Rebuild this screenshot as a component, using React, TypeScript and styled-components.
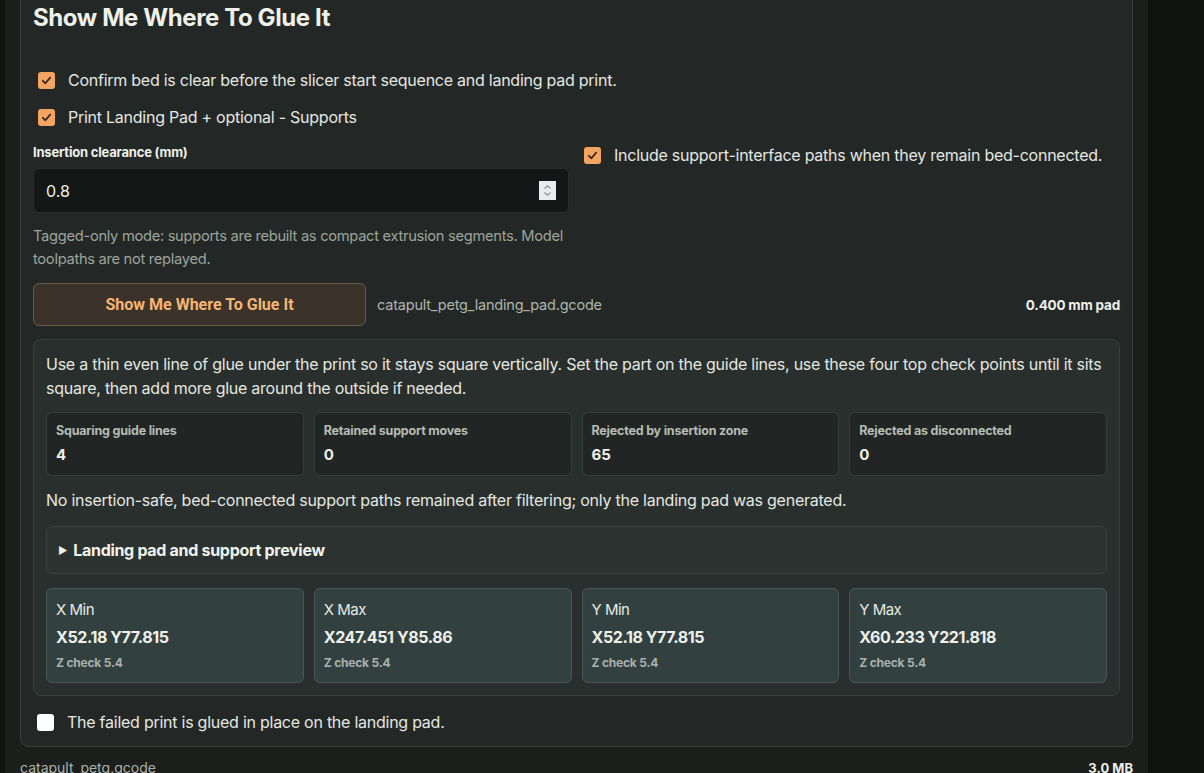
import styled, { createGlobalStyle } from "styled-components";

const GlobalStyle = createGlobalStyle`
	html, body {
		margin: 0;
		padding: 0;
		background: #101210;
		overflow: hidden;
	}
	body {
		font-family: Inter, "Noto Sans", sans-serif;
		color: #e6e9e3;
	}
	* {
		box-sizing: border-box;
	}
`;

const Shell = styled.div`
	margin-left: 5px;
	width: 1143px;
	height: 100vh;
	padding: 0 15px;
	background: #1c1e1b;
	overflow: hidden;
`;

const Card = styled.section`
	margin-top: -10px;
	padding: 11px 12px 12px;
	background: #232826;
	border: 1px solid #3a403c;
	border-radius: 9px;
	display: flex;
	flex-direction: column;
`;

const Title = styled.h2`
	margin: 0 0 34px;
	font-size: 24px;
	line-height: 32px;
	font-weight: 700;
	letter-spacing: -0.4px;
	color: #eef0ea;
`;

const CheckRow = styled.label`
	display: flex;
	align-items: center;
	gap: 13px;
	padding-left: 5px;
	font-size: 16px;
	line-height: 24px;
	letter-spacing: -0.25px;
	color: #e4e7e1;
	& + & {
		margin-top: 13px;
	}
`;

const Box = styled.span<{ $checked?: boolean }>`
	flex: none;
	width: 17px;
	height: 17px;
	border-radius: 3px;
	background: ${(p) => (p.$checked ? "#f2a560" : "#ffffff")};
	display: flex;
	align-items: center;
	justify-content: center;
`;

const Columns = styled.div`
	display: grid;
	grid-template-columns: 1fr 1fr;
	gap: 15px;
	margin-top: 14px;
	align-items: start;
`;

const Field = styled.div`
	display: flex;
	flex-direction: column;
`;

const FieldLabel = styled.span`
	font-size: 13px;
	line-height: 18px;
	font-weight: 700;
	letter-spacing: -0.2px;
	color: #eef0ea;
`;

const InputBox = styled.div`
	margin-top: 7px;
	height: 45px;
	padding: 0 12px;
	background: #141715;
	border: 1px solid #2a2f2c;
	border-radius: 6px;
	display: flex;
	align-items: center;
	justify-content: space-between;
	font-size: 16px;
	color: #eef0ea;
`;

const Spinner = styled.span`
	width: 17px;
	height: 19px;
	background: #e9ebee;
	display: flex;
	align-items: center;
	justify-content: center;
`;

const Hint = styled.p`
	margin: 12px 0 0;
	font-size: 14.7px;
	line-height: 23px;
	letter-spacing: -0.3px;
	color: #9ea39d;
`;

const ActionRow = styled.div`
	margin-top: 12px;
	display: flex;
	align-items: center;
	gap: 11px;
`;

const GlueButton = styled.button`
	width: 333px;
	height: 43px;
	background: #3b3329;
	border: 1px solid #6b5a45;
	border-radius: 6px;
	color: #f5b474;
	font-family: Roboto, "Liberation Sans", sans-serif;
	font-size: 16px;
	font-weight: 700;
	letter-spacing: 0;
`;

const FileName = styled.span`
	font-size: 14.5px;
	letter-spacing: -0.2px;
	color: #aeb3ad;
`;

const PadSize = styled.span`
	margin-left: auto;
	font-size: 13.5px;
	font-weight: 700;
	letter-spacing: -0.2px;
	color: #eef0ea;
`;

const Result = styled.div`
	margin-top: 13px;
	padding: 12px;
	background: #292f2c;
	border: 1px solid #39403c;
	border-radius: 8px;
	display: flex;
	flex-direction: column;
	gap: 12px;
`;

const Body = styled.p`
	margin: 0;
	font-size: 16px;
	line-height: 24px;
	letter-spacing: -0.25px;
	color: #e4e7e1;
`;

const Stats = styled.div`
	display: grid;
	grid-template-columns: repeat(4, 1fr);
	gap: 10px;
`;

const Stat = styled.div`
	padding: 9px 9px 9px;
	background: #212624;
	border: 1px solid #373e3a;
	border-radius: 6px;
	display: flex;
	flex-direction: column;
	gap: 4px;
`;

const StatLabel = styled.span`
	font-size: 12.5px;
	line-height: 18px;
	font-weight: 700;
	letter-spacing: -0.2px;
	color: #b6bbb4;
`;

const StatValue = styled.span`
	font-size: 15px;
	line-height: 22px;
	font-weight: 700;
	color: #eef0ea;
`;

const Preview = styled.div`
	margin-top: 2px;
	padding: 12px 11px;
	background: #2c322f;
	border: 1px solid #3b423e;
	border-radius: 6px;
	font-size: 16px;
	line-height: 22px;
	font-weight: 700;
	letter-spacing: -0.3px;
	color: #f0f2ec;
	display: flex;
	align-items: center;
	gap: 6px;
`;

const Caret = styled.span`
	font-size: 10px;
	color: #f0f2ec;
`;

const Corners = styled.div`
	margin-top: 2px;
	display: grid;
	grid-template-columns: repeat(4, 1fr);
	gap: 10px;
`;

const Corner = styled.div`
	padding: 9px 9px 10px;
	background: #324140;
	border: 1px solid #485756;
	border-radius: 6px;
	display: flex;
	flex-direction: column;
`;

const CornerName = styled.span`
	font-size: 15px;
	line-height: 24px;
	letter-spacing: -0.5px;
	color: #e6e9e3;
`;

const CornerCoords = styled.span`
	margin-top: 3px;
	font-size: 16px;
	line-height: 24px;
	font-weight: 700;
	letter-spacing: -0.4px;
	color: #eef0ea;
`;

const ZCheck = styled.span`
	margin-top: 5px;
	font-size: 12px;
	line-height: 18px;
	font-weight: 700;
	letter-spacing: -0.2px;
	color: #a9b0ab;
`;

const ConfirmRow = styled(CheckRow)`
	margin-top: 14px;
	padding-left: 4px;
`;

const Footer = styled.div`
	margin-top: 11px;
	display: flex;
	justify-content: space-between;
	align-items: center;
	font-size: 14px;
	line-height: 20px;
	color: #aeb3ad;
`;

const FooterSize = styled.span`
	font-size: 13px;
	font-weight: 700;
	color: #eef0ea;
`;

function Check({ checked = true }: { checked?: boolean }) {
	return (
		<Box $checked={checked}>
			{checked && (
				<svg width="11" height="11" viewBox="0 0 12 12">
					<path
						d="M2 6.3 L4.8 9 L10 2.8"
						fill="none"
						stroke="#3b2413"
						strokeWidth="1.9"
						strokeLinecap="round"
						strokeLinejoin="round"
					/>
				</svg>
			)}
		</Box>
	);
}

const stats = [
	{ label: "Squaring guide lines", value: "4" },
	{ label: "Retained support moves", value: "0" },
	{ label: "Rejected by insertion zone", value: "65" },
	{ label: "Rejected as disconnected", value: "0" },
];

const corners = [
	{ name: "X Min", coords: "X52.18 Y77.815", z: "5.4" },
	{ name: "X Max", coords: "X247.451 Y85.86", z: "5.4" },
	{ name: "Y Min", coords: "X52.18 Y77.815", z: "5.4" },
	{ name: "Y Max", coords: "X60.233 Y221.818", z: "5.4" },
];

export default function App() {
	return (
		<Shell>
			<GlobalStyle />
			<Card>
				<Title>Show Me Where To Glue It</Title>
				<CheckRow>
					<Check />
					Confirm bed is clear before the slicer start sequence and landing pad print.
				</CheckRow>
				<CheckRow>
					<Check />
					Print Landing Pad + optional - Supports
				</CheckRow>
				<Columns>
					<Field>
						<FieldLabel>Insertion clearance (mm)</FieldLabel>
						<InputBox>
							0.8
							<Spinner>
								<svg width="9" height="13" viewBox="0 0 9 13">
									<path
										d="M1.5 4.5 L4.5 1.8 L7.5 4.5 M1.5 8.5 L4.5 11.2 L7.5 8.5"
										fill="none"
										stroke="#8a8d92"
										strokeWidth="1.1"
									/>
								</svg>
							</Spinner>
						</InputBox>
						<Hint>
							Tagged-only mode: supports are rebuilt as compact extrusion segments. Model
							toolpaths are not replayed.
						</Hint>
					</Field>
					<CheckRow style={{ paddingLeft: 0 }}>
						<Check />
						Include support-interface paths when they remain bed-connected.
					</CheckRow>
				</Columns>
				<ActionRow>
					<GlueButton>Show Me Where To Glue It</GlueButton>
					<FileName>catapult_petg_landing_pad.gcode</FileName>
					<PadSize>0.400 mm pad</PadSize>
				</ActionRow>
				<Result>
					<Body>
						Use a thin even line of glue under the print so it stays square vertically. Set the part on
						the guide lines, use these four top check points until it sits square, then add more glue
						around the outside if needed.
					</Body>
					<Stats>
						{stats.map((s) => (
							<Stat key={s.label}>
								<StatLabel>{s.label}</StatLabel>
								<StatValue>{s.value}</StatValue>
							</Stat>
						))}
					</Stats>
					<Body>
						No insertion-safe, bed-connected support paths remained after filtering; only the landing pad
						was generated.
					</Body>
					<Preview>
						<Caret>►</Caret>
						Landing pad and support preview
					</Preview>
					<Corners>
						{corners.map((c) => (
							<Corner key={c.name}>
								<CornerName>{c.name}</CornerName>
								<CornerCoords>{c.coords}</CornerCoords>
								<ZCheck>Z check {c.z}</ZCheck>
							</Corner>
						))}
					</Corners>
				</Result>
				<ConfirmRow>
					<Check checked={false} />
					The failed print is glued in place on the landing pad.
				</ConfirmRow>
			</Card>
			<Footer>
				<span>catapult_petg.gcode</span>
				<FooterSize>3.0 MB</FooterSize>
			</Footer>
		</Shell>
	);
}
